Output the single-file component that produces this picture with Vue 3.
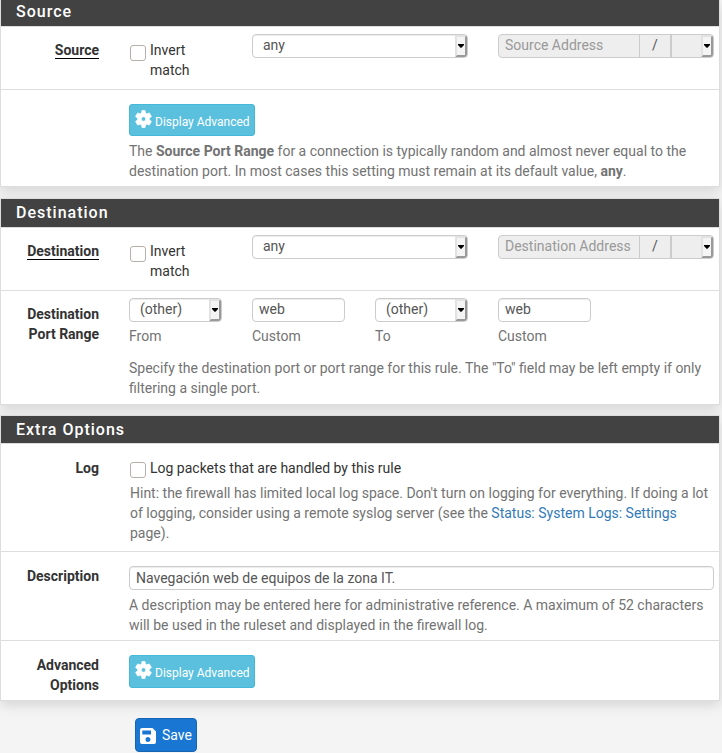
<script setup>
import { h } from 'vue'

const addressRows = [
  { title: 'Source', placeholder: 'Source Address' },
  { title: 'Destination', placeholder: 'Destination Address' },
]

const ports = [
  { kind: 'select', value: '(other)', caption: 'From' },
  { kind: 'input', value: 'web', caption: 'Custom' },
  { kind: 'select', value: '(other)', caption: 'To' },
  { kind: 'input', value: 'web', caption: 'Custom' },
]

const ArrowButton = () =>
  h('span', { class: 'arrow' }, [
    h('svg', { width: 6, height: 4, viewBox: '0 0 6 4' }, [
      h('path', { d: 'M0 0h6v1L3.5 3.8h-1L0 1z', fill: '#000' }),
    ]),
  ])

const AddressRow = (props) =>
  h('div', { class: 'row address' }, [
    h('div', { class: 'label' }, [h('span', { class: 'linked' }, props.title)]),
    h('div', { class: 'cols' }, [
      h('label', { class: 'check' }, [h('i', { class: 'box' }), h('span', 'Invert match')]),
      h('div', { class: 'select wide' }, [h('span', 'any'), h(ArrowButton)]),
      h('div', { class: 'group' }, [
        h('div', { class: 'address-field' }, props.placeholder),
        h('div', { class: 'slash' }, '/'),
        h('div', { class: 'mask' }, [h(ArrowButton)]),
      ]),
    ]),
  ])
AddressRow.props = ['title', 'placeholder']

const gear =
  'M19.4 13a7.6 7.6 0 0 0 0-2l2.5-1.9a.7.7 0 0 0 .2-.9l-2.4-4.1a.7.7 0 0 0-.9-.3l-2.9 1.200a8 8 0 0 0-1.700-1L13.800.9a.8.8 0 0 0-.8-.7h-3a.8.8 0 0 0-.8.7L8.800 4a8 8 0 0 0-1.700 1L4.200 3.800a.7.7 0 0 0-.9.3L.9 8.200a.7.7 0 0 0 .2.9L3.600 11a7.600 7.600 0 0 0 0 2l-2.500 1.900a.7.7 0 0 0-.2.9l2.400 4.100a.7.7 0 0 0 .9.3l2.900-1.200a8 8 0 0 0 1.700 1l.4 3.100a.8.8 0 0 0 .8.7h3a.8.8 0 0 0 .8-.7l.4-3.100a8 8 0 0 0 1.700-1l2.900 1.200a.7.7 0 0 0 .9-.3l2.400-4.100a.7.7 0 0 0-.2-.9zM11.500 9a3 3 0 1 1 0 6 3 3 0 0 1 0-6z'

const AdvancedButton = () =>
  h('button', { class: 'info', type: 'button' }, [
    h('svg', { width: 17, height: 18, viewBox: '0 0 23 24' }, [
      h('path', { d: gear, fill: '#fff', stroke: '#fff', 'stroke-width': 0.8, 'fill-rule': 'evenodd' }),
    ]),
    h('span', 'Display Advanced'),
  ])
</script>

<template>
  <main class="page">
    <section class="panel first">
      <h2>Source</h2>
      <AddressRow v-bind="addressRows[0]" />
      <div class="row source-adv">
        <div class="label"></div>
        <div class="content">
          <AdvancedButton />
          <p class="help">The <b>Source Port Range</b> for a connection is typically random and almost never equal to the<br>destination port. In most cases this setting must remain at its default value, <b>any</b>.</p>
        </div>
      </div>
    </section>

    <section class="panel second">
      <h2>Destination</h2>
      <AddressRow v-bind="addressRows[1]" />
      <div class="row port-row">
        <div class="label">Destination Port Range</div>
        <div class="content">
          <div class="cols">
            <div v-for="(p, i) in ports" :key="i">
              <div v-if="p.kind === 'select'" class="select"><span>{{ p.value }}</span><ArrowButton /></div>
              <div v-else class="input">{{ p.value }}</div>
              <div class="caption">{{ p.caption }}</div>
            </div>
          </div>
          <p class="help">Specify the destination port or port range for this rule. The "To" field may be left empty if only<br>filtering a single port.</p>
        </div>
      </div>
    </section>

    <section class="panel third">
      <h2>Extra Options</h2>
      <div class="row log-row">
        <div class="label">Log</div>
        <div class="content">
          <label class="check"><i class="box"></i><span>Log packets that are handled by this rule</span></label>
          <p class="help">Hint: the firewall has limited local log space. Don't turn on logging for everything. If doing a lot<br>of logging, consider using a remote syslog server (see the <a>Status: System Logs: Settings</a><br>page).</p>
        </div>
      </div>
      <div class="row desc-row">
        <div class="label">Description</div>
        <div class="content">
          <div class="input">Navegación web de equipos de la zona IT.</div>
          <p class="help">A description may be entered here for administrative reference. A maximum of 52 characters<br>will be used in the ruleset and displayed in the firewall log.</p>
        </div>
      </div>
      <div class="row adv-row">
        <div class="label">Advanced Options</div>
        <div class="content"><AdvancedButton /></div>
      </div>
    </section>

    <button class="save" type="button">
      <svg width="16" height="16" viewBox="0 0 16 16">
        <path fill="#fff" fill-rule="evenodd" d="M2 0h10.500L16 3.500V14a2 2 0 0 1-2 2H2a2 2 0 0 1-2-2V2a2 2 0 0 1 2-2zM2.300 2.600v4h8.700v-4zM8 9a2.500 2.500 0 1 0 0 5 2.500 2.500 0 0 0 0-5z" />
      </svg>
      <span>Save</span>
    </button>
  </main>
</template>

<style>
body {
  background: #f4f4f4;
  overflow: hidden;
}
</style>

<style scoped>
.page {
  width: 722px;
  height: 753px;
  overflow: hidden;
  background: #f4f4f4;
  font: 14px/20px Roboto, sans-serif;
  color: #333;
}
.page :deep(*) {
  box-sizing: border-box;
}
.panel {
  width: 720px;
  border: 1px solid #ddd;
  background: #fff;
  box-shadow: 0 4px 12px rgba(0, 0, 0, 0.13);
  margin-bottom: 11px;
}
.panel.first {
  border-top: 0;
}
.panel.second {
  margin-bottom: 10px;
}
h2 {
  margin: 0;
  padding: 0 15px;
  height: 29px;
  background: #424242;
  border-bottom: 1px solid #ddd;
  color: #fff;
  font-size: 16px;
  font-weight: 500;
  line-height: 28px;
  letter-spacing: 1px;
}
.first h2 {
  height: 27px;
  line-height: 23px;
}
.third h2 {
  height: 28px;
}
.page :deep(.row) {
  display: flex;
  gap: 30px;
  padding-right: 5px;
  border-bottom: 1px solid #ddd;
}
.page .row:last-child {
  border-bottom: 0;
}
.page :deep(.address) {
  height: 63px;
  padding-top: 7px;
}
.source-adv {
  height: 96px;
  padding-top: 14px;
}
.port-row {
  height: 113px;
  padding-top: 7px;
}
.log-row {
  height: 108px;
  padding-top: 14px;
}
.desc-row {
  height: 89px;
  padding-top: 14px;
}
.adv-row {
  height: 59px;
  padding-top: 14px;
}
.page :deep(.label) {
  width: 98px;
  padding-left: 20px;
  flex: none;
  text-align: right;
  font-weight: 700;
}
.page :deep(.address .label),
.port-row .label {
  padding-top: 6px;
}
.page :deep(.linked) {
  display: inline-block;
  height: 19px;
  border-bottom: 1px solid #000;
}
.content {
  flex: 1;
}
.page :deep(.cols) {
  flex: 1;
  display: grid;
  grid-template-columns: repeat(4, 93px);
  column-gap: 30px;
}
.page :deep(.address .cols) {
  grid-template-columns: 93px 216px 216px;
}
.page :deep(.check) {
  display: flex;
  gap: 4px;
  padding-left: 1px;
}
.page :deep(.address .check) {
  padding-top: 6px;
}
.page :deep(.box) {
  flex: none;
  width: 16px;
  height: 16px;
  margin-top: 5px;
  border: 1px solid #b6b0aa;
  border-radius: 3px;
  background: #fff;
}
.log-row :deep(.box) {
  margin-top: 4px;
}
.page :deep(.select),
.input {
  height: 24px;
  border: 1px solid #ccc;
  border-radius: 4px;
  background: #fff;
  box-shadow: inset 0 1px 1px rgba(0, 0, 0, 0.075);
  color: #555;
  line-height: 21px;
}
.input {
  padding: 0 6px;
}
.desc-row .input {
  line-height: 23px;
}
.page :deep(.select) {
  display: flex;
  justify-content: space-between;
  padding-left: 10px;
}
.page :deep(.arrow) {
  flex: none;
  display: flex;
  align-items: center;
  justify-content: center;
  width: 12px;
  height: 22px;
  border-style: solid;
  border-width: 2px;
  border-color: #e2e2e2 #999 #999 #e2e2e2;
  border-radius: 0 3px 3px 0;
  background: #f4f4f4;
}
.page :deep(.group) {
  display: flex;
  height: 24px;
  border: 1px solid #ccc;
  border-radius: 4px;
  background: #eee;
  line-height: 21px;
}
.page :deep(.address-field) {
  width: 140px;
  padding-left: 6px;
  color: #999;
  white-space: nowrap;
}
.page :deep(.slash) {
  width: 33px;
  border: solid #ccc;
  border-width: 0 2px 0 1px;
  text-align: center;
  color: #555;
}
.page :deep(.mask) {
  flex: 1;
  display: flex;
  justify-content: flex-end;
}
.help {
  margin: 0;
  color: #737373;
  white-space: nowrap;
}
.source-adv .help,
.log-row .help,
.desc-row .help {
  margin-top: 5px;
}
.log-row .help {
  padding-left: 1px;
}
.port-row .help {
  margin-top: 12px;
}
.caption {
  margin-top: 4px;
  color: #737373;
}
a {
  color: #337ab7;
}
.page :deep(.info) {
  display: flex;
  align-items: center;
  gap: 3px;
  width: 126px;
  height: 32px;
  padding: 0 0 0 5px;
  border: 1px solid #46b8da;
  border-radius: 3px;
  background: #5bc0de;
  color: #fff;
  font: 12px/18px Roboto, sans-serif;
  white-space: nowrap;
}
.adv-row :deep(.info) {
  height: 33px;
}
.page :deep(.info svg) {
  flex: none;
  margin-top: -2px;
}
.page :deep(.info span) {
  margin-top: 4px;
}
.adv-row :deep(.info span) {
  margin-top: 2px;
}
.adv-row :deep(.info svg) {
  margin-top: -3px;
}
.save {
  display: flex;
  align-items: center;
  gap: 6px;
  width: 62px;
  height: 34px;
  margin: 17px 0 0 135px;
  padding: 0 0 0 4px;
  border: 1px solid #1565b0;
  border-radius: 4px;
  background: #1976d2;
  color: #fff;
  font: 14px/20px Roboto, sans-serif;
}
.save svg {
  margin-top: 1px;
}
.third {
  margin-bottom: 0;
}
</style>
